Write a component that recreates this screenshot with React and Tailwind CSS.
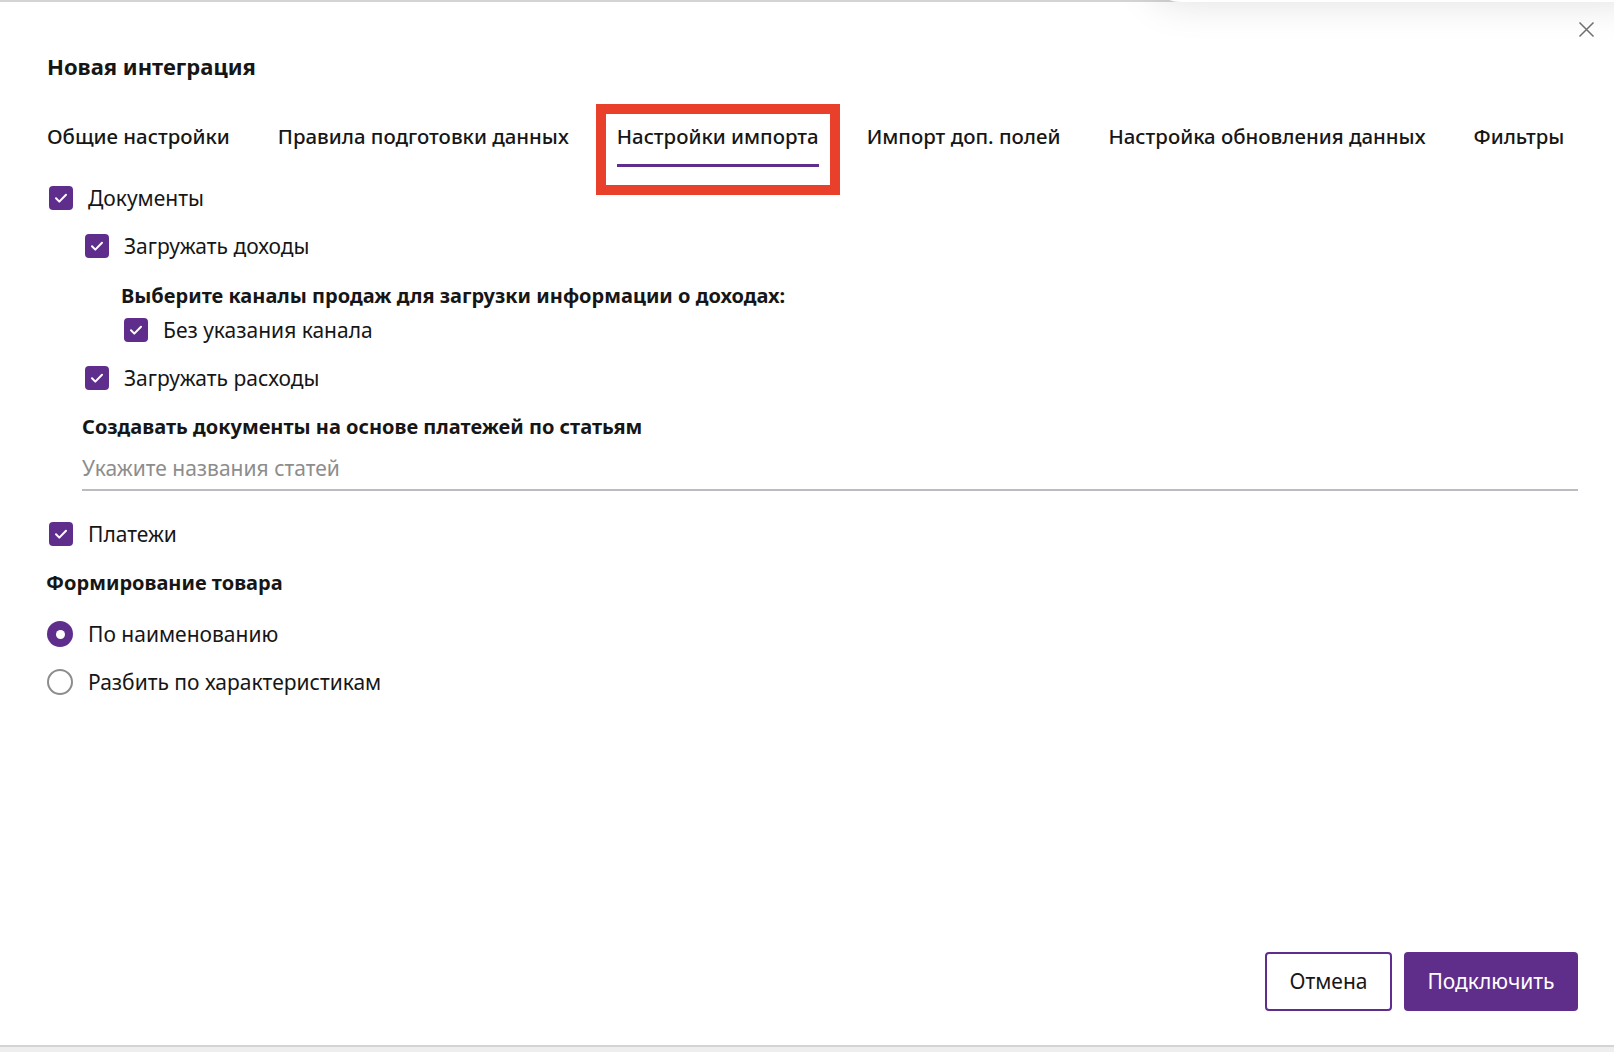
import { useState } from 'react';

const TABS = [
  'Общие настройки',
  'Правила подготовки данных',
  'Настройки импорта',
  'Импорт доп. полей',
  'Настройка обновления данных',
  'Фильтры',
];

function Check({ checked = true }) {
  return (
    <span
      className={`flex h-[24px] w-[24px] shrink-0 items-center justify-center rounded-[4px] ${
        checked ? 'bg-[#5f2e8d]' : 'border-2 border-[#8d8d8d] bg-white'
      }`}
    >
      {checked && (
        <svg width="24" height="24" viewBox="0 0 24 24" fill="none">
          <path d="M7 12.3l3.3 3.3L17 8.8" stroke="#fff" strokeWidth="2" strokeLinecap="round" strokeLinejoin="round" />
        </svg>
      )}
    </span>
  );
}

function CheckRow({ label, indent, className = '' }) {
  return (
    <label className={`flex h-[32px] cursor-pointer items-center gap-[15px] ${indent} ${className}`}>
      <Check />
      <span className="text-[21px] leading-[32px] text-[#161616]">{label}</span>
    </label>
  );
}

function Radio({ checked, label, className = '', onClick }) {
  return (
    <button onClick={onClick} className={`flex h-[32px] items-center gap-[15px] pl-[47px] text-left ${className}`}>
      {checked ? (
        <span className="flex h-[26px] w-[26px] items-center justify-center rounded-full bg-[#5f2e8d]">
          <span className="h-[9px] w-[9px] rounded-full bg-white" />
        </span>
      ) : (
        <span className="h-[26px] w-[26px] rounded-full border-2 border-[#8d8d8d] bg-white" />
      )}
      <span className="text-[21px] leading-[32px] text-[#161616]">{label}</span>
    </button>
  );
}

export default function App() {
  const [mode, setMode] = useState('name');

  return (
    <div
      className="relative h-[1052px] w-full overflow-hidden bg-[#eeeeee] text-[#161616]"
      style={{ fontFamily: '"Noto Sans", "Open Sans", sans-serif' }}
    >
      {/* panel */}
      <div className="relative flex h-[1047px] flex-col border-t-2 border-b-2 border-[#d4d4d4] bg-white pr-[36px]">
        {/* shadow of an element above the viewport */}
        <div className="absolute -top-[70px] left-[1150px] right-[-40px] h-[70px] rounded-[30px] bg-white shadow-[0_0_40px_rgba(0,0,0,0.13)]" />

        <button className="absolute right-[19px] top-[19px] text-[#6f6f6f]">
          <svg width="17" height="17" viewBox="0 0 17 17" fill="none">
            <path d="M1.5 1.5l14 14M15.5 1.5l-14 14" stroke="currentColor" strokeWidth="1.5" />
          </svg>
        </button>

        <h1 className="mt-[49px] pl-[47px] text-[22px] font-bold leading-[30px]">Новая интеграция</h1>

        <nav className="mt-[40px] flex items-start gap-[48px] pl-[47px]">
          {TABS.map((t) => {
            const active = t === 'Настройки импорта';
            return (
              <div
                key={t}
                className={`relative whitespace-nowrap pb-[13px] text-[20.4px] font-medium leading-[30px] text-[#161616] ${
                  active ? 'border-b-[3px] border-[#5f2e8d]' : 'border-b-[3px] border-transparent'
                }`}
              >
                {t}
                {active && (
                  <span className="pointer-events-none absolute -bottom-[31px] -left-[21px] -right-[21px] -top-[17px] border-[10px] border-[#e8402a]" />
                )}
              </div>
            );
          })}
        </nav>

        <CheckRow label="Документы" indent="pl-[49px]" className="mt-[15px]" />
        <CheckRow label="Загружать доходы" indent="pl-[85px]" className="mt-[16px]" />
        <div className="mt-[18px] pl-[121px] text-[20px] font-bold leading-[32px]">
          Выберите каналы продаж для загрузки информации о доходах:
        </div>
        <CheckRow label="Без указания канала" indent="pl-[124px]" className="mt-[2px]" />
        <CheckRow label="Загружать расходы" indent="pl-[85px]" className="mt-[16px]" />
        <div className="mt-[17px] pl-[82px] text-[20px] font-bold leading-[32px]">
          Создавать документы на основе платежей по статьям
        </div>
        <div className="ml-[82px] mt-[9px] border-b-2 border-[#bcbbc1] pb-[5px]">
          <input
            placeholder="Укажите названия статей"
            className="h-[32px] w-full bg-transparent text-[21px] leading-[32px] text-[#161616] outline-none placeholder:text-[#8d8d8d]"
          />
        </div>
        <CheckRow label="Платежи" indent="pl-[49px]" className="mt-[27px]" />
        <div className="mt-[17px] pl-[46px] text-[20px] font-bold leading-[32px]">Формирование товара</div>
        <Radio checked={mode === 'name'} label="По наименованию" className="mt-[19px]" onClick={() => setMode('name')} />
        <Radio checked={mode === 'props'} label="Разбить по характеристикам" className="mt-[16px]" onClick={() => setMode('props')} />

        <div className="mb-[34px] mt-auto flex justify-end gap-[12px]">
          <button className="h-[59px] w-[127px] rounded-[4px] border-2 border-[#5f2e8d] bg-white text-[21px] text-[#161616]">
            Отмена
          </button>
          <button className="h-[59px] w-[174px] rounded-[4px] bg-[#5f2e8b] text-[21px] text-white">
            Подключить
          </button>
        </div>
      </div>
    </div>
  );
}
